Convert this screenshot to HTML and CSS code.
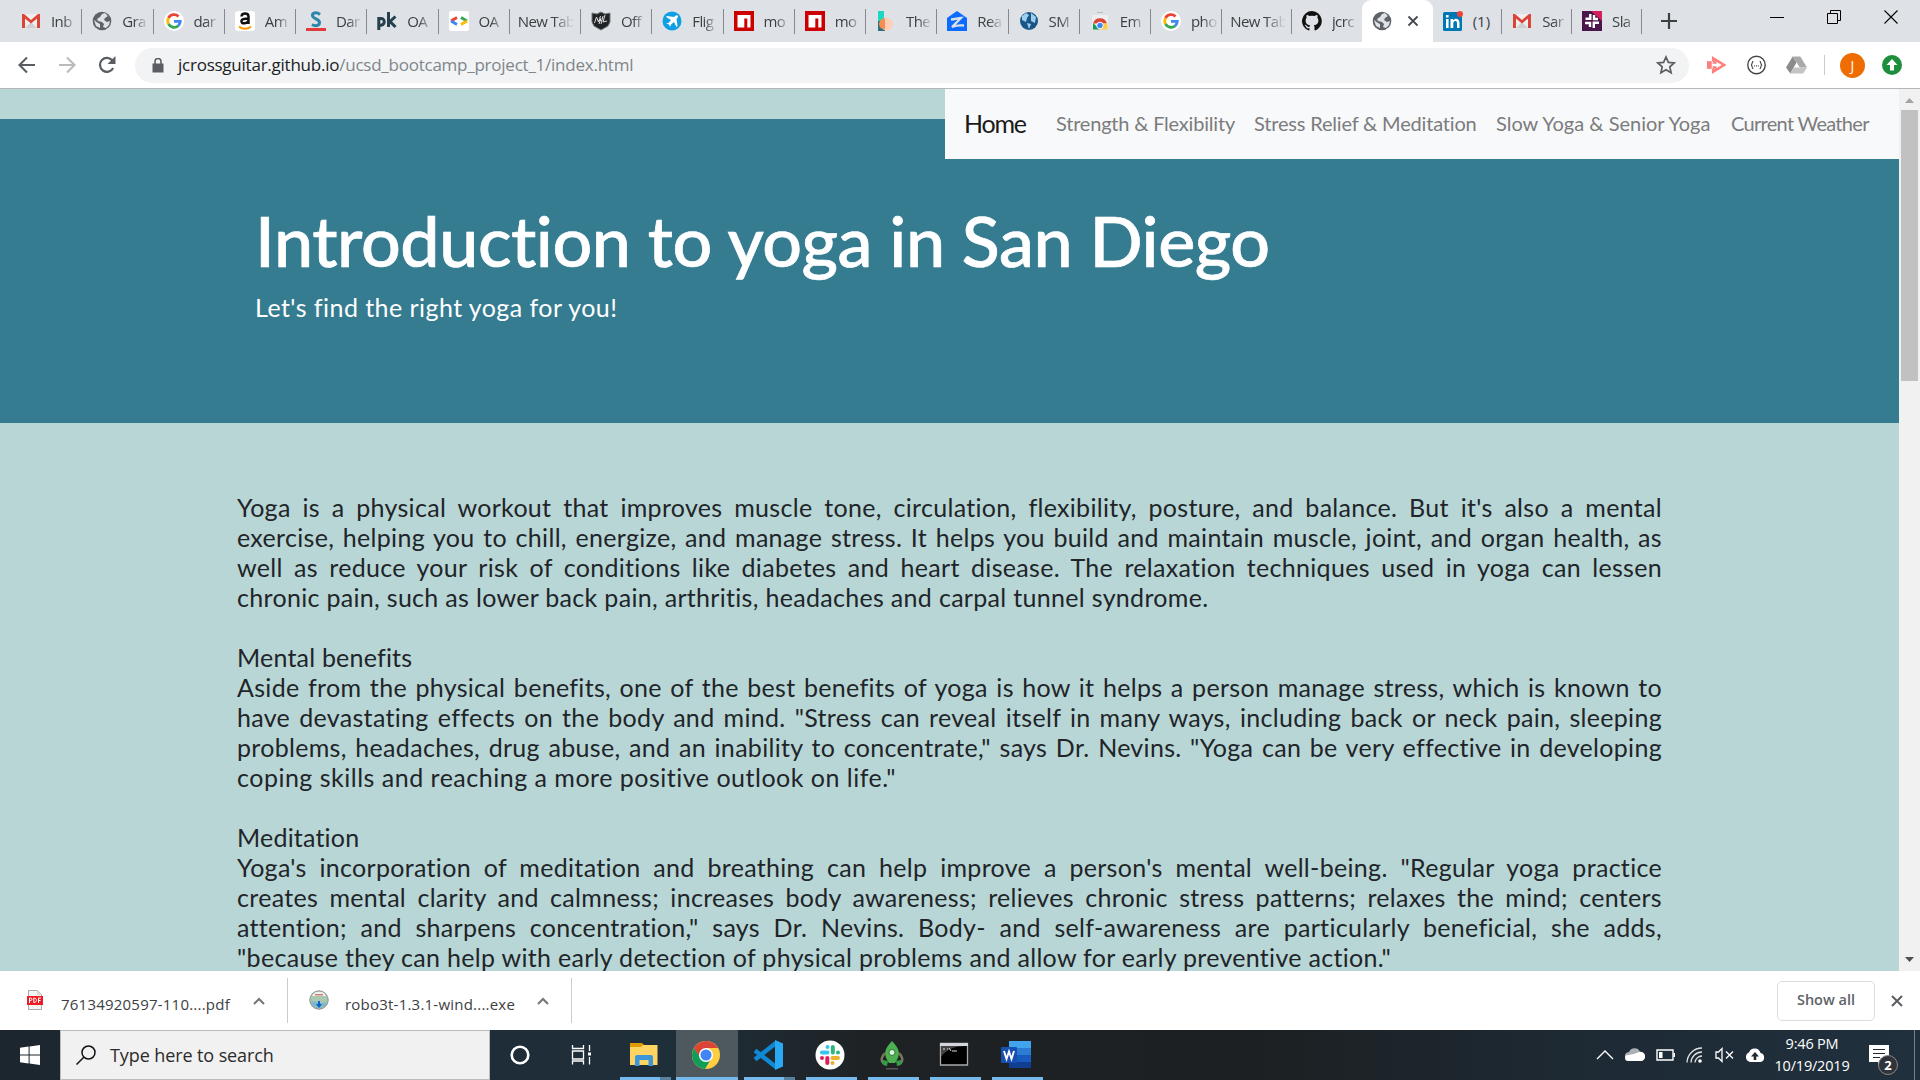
FILE: index.html
```html
<!DOCTYPE html>
<html lang="en">
<head>
<meta charset="utf-8">
<title>Introduction to yoga in San Diego</title>
<link rel="stylesheet" href="styles.css">
</head>
<body>
<svg class="defs" width="0" height="0">
  <symbol id="gmail" viewBox="0 0 20 20"><path fill="#eee" d="M1 3h18v14H1z"/><path fill="#d0d0d0" d="M4 17l6-6 6 6z"/><path fill="#db4437" d="M1 3h2l7 6 7-6h2v14h-3V7.500l-6 5-6-5V17H1z"/></symbol>
  <symbol id="globe" viewBox="0 0 20 20"><circle cx="10" cy="10" r="9.300" fill="#5f6368"/><path fill="#dee1e6" d="M10 3l3-1 3 3-3 2-1 2 3 2 3-1-1 4-3 3-3-1 1-3-2-2-4-1-1-2 3-2zM2 9l4 3 2 1v4L4 15z"/></symbol>
  <symbol id="google" viewBox="0 0 20 20"><circle cx="10" cy="10" r="10" fill="#fff"/><g fill="none" stroke-width="2.800"><path stroke="#ea4335" d="M4.500 7a6.300 6.300 0 0 1 10-1.600"/><path stroke="#fbbc05" d="M4.500 7a6.300 6.300 0 0 0 0 6"/><path stroke="#34a853" d="M4.500 13a6.300 6.300 0 0 0 9.800 1.700"/><path stroke="#4285f4" d="M14.300 14.700a6 6 0 0 0 2-4.400H10"/></g></symbol>
  <symbol id="npm" viewBox="0 0 20 20"><path fill="#c00" d="M0 0h20v20H0z"/><path fill="#fff" d="M3.500 4h13v12.500h-3.200V7.500h-3v9H3.500z"/></symbol>
</svg>

<header class="tabstrip">
  <div class="tab"><svg><use href="#gmail"/></svg><span>Inb</span></div>
  <div class="tab"><svg><use href="#globe"/></svg><span>Gra</span></div>
  <div class="tab"><svg><use href="#google"/></svg><span>dar</span></div>
  <div class="tab"><svg viewBox="0 0 20 20"><rect width="20" height="20" rx="3" fill="#fff"/><path d="M6.500 5.500c.3-4 7-4 7 0V13M13.500 7.500c-4 0-7.300.5-7 3 .5 2.800 6 2.400 7-1" fill="none" stroke="#111" stroke-width="2.500"/><path d="M4 15.500c3 3 9 3 12 0" fill="none" stroke="#f90" stroke-width="1.800"/></svg><span>Am</span></div>
  <div class="tab"><svg viewBox="0 0 20 20"><path d="M14 3.500C10 .5 6 2 6.500 5s7 3 7 6.500-4.500 4-7.500 2" fill="none" stroke="#2e86ab" stroke-width="3"/><path d="M0 17h20v3H0z" fill="#e23b3b"/></svg><span>Dar</span></div>
  <div class="tab"><svg viewBox="0 0 20 20"><g fill="none" stroke="#263f4d" stroke-width="3"><path d="M1.800 19V6M2 8c7-3 7 8 0 6M11.500 1v15M18.500 5.500L13 10.500l5.500 5.500"/></g></svg><span>OA</span></div>
  <div class="tab"><svg viewBox="0 0 20 20"><rect width="20" height="20" rx="2" fill="#fff"/><g fill="none" stroke-width="2.800"><path stroke="#ea4335" d="M8 6.500l-6 3.500"/><path stroke="#4285f4" d="M2 10l6 3.500"/><path stroke="#34a853" d="M12 6.500l6 3.500"/><path stroke="#fbbc05" d="M18 10l-6 3.500"/></g></svg><span>OA</span></div>
  <div class="tab plain"><span>New Tab</span></div>
  <div class="tab"><svg viewBox="0 0 20 20"><path fill="#202326" stroke="#777" d="M1 2l5 1 4-2 4 2 5-1v9l-2 4-7 4-7-4-2-4z"/><path d="M3.500 12l2-6 2 5 2-6M8 13l2-6M7.500 9.500h3M12 5l-2 8M14 4l-2 7 4-1" stroke="#ddd" fill="none"/></svg><span>Off</span></div>
  <div class="tab"><svg viewBox="0 0 20 20"><circle cx="10" cy="10" r="9.500" fill="#0e9fe5"/><path fill="#fff" d="M15.500 4.500c-1-.8-2 0-3.500 1.500L5 5l-1 1 5 3-2.500 3L4 12l3 1.500L8 16l1-2.500 3-2.500 2.500 5 1-1-1-7c1.500-1.500 2-2.500 1-3.500z"/></svg><span>Flig</span></div>
  <div class="tab"><svg><use href="#npm"/></svg><span>mo</span></div>
  <div class="tab"><svg><use href="#npm"/></svg><span>mo</span></div>
  <div class="tab"><svg viewBox="0 0 20 20"><path fill="#1fd6c0" d="M2 0h6v11H2z"/><path fill="#2d6e80" d="M2 10h7v10H2z"/><circle cx="10.500" cy="13" r="6.300" fill="#ffcdb8"/><path fill="#f58e4e" d="M3 13a5.500 5.500 0 0 1 6-5.500v11c-4-.5-6-2.500-6-5.500z"/></svg><span>The</span></div>
  <div class="tab"><svg viewBox="0 0 20 20"><path fill="#0b6cff" d="M10 0l10 7v13H0V7z"/><path d="M4 8.500c4 0 7-1.500 10-1.500L5 16c5-2 8-1.500 12-1.500" fill="none" stroke="#dee1e6" stroke-width="2.300"/></svg><span>Rea</span></div>
  <div class="tab"><svg viewBox="0 0 20 20"><circle cx="10" cy="10" r="9" fill="#1b5585"/><path fill="#9bd0ee" d="M3 5l4-3 3 2-2 3-1 4-4-2zM12 2l5 4-1 6-4-2V6zM8 12l4 1-2 5z"/></svg><span>SM</span></div>
  <div class="tab"><svg viewBox="0 0 20 20"><path fill="#bbb" d="M7 1h6v1H7z"/><path fill="#eee" d="M2 4h16v13H2z"/><path fill="#db4437" d="M3 12.500a7.300 7.300 0 0 1 14 0z"/><path fill="#0f9d58" d="M3 12l7 6.500H3z"/><path fill="#ffcd40" d="M12 12.500h5.500v6H9z"/><circle cx="10" cy="14.500" r="3.300" fill="#4285f4" stroke="#fff"/></svg><span>Em</span></div>
  <div class="tab"><svg><use href="#google"/></svg><span>pho</span></div>
  <div class="tab plain narrow"><span>New Tab</span></div>
  <div class="tab narrow bare"><svg viewBox="0 0 16 16"><path fill="#111" d="M8 0a8 8 0 0 0-2.500 15.600c.4 0 .5-.2.500-.400v-1.500c-2.200.5-2.700-1-2.700-1-.4-.9-.9-1.200-.9-1.200-.7-.5.100-.5.100-.5.800.1 1.200.8 1.200.8.700 1.300 1.900.9 2.300.7.100-.5.300-.9.500-1.100-1.800-.2-3.600-.9-3.600-4 0-.9.300-1.600.8-2.100-.1-.2-.4-1 .1-2.100 0 0 .7-.2 2.200.8a7.500 7.500 0 0 1 4 0c1.500-1 2.200-.8 2.200-.8.400 1.100.2 1.900.1 2.100.5.600.8 1.300.8 2.100 0 3.100-1.900 3.800-3.700 4 .3.200.6.700.6 1.500v2.200c0 .2.100.5.600.4A8 8 0 0 0 8 0z"/></svg><span>jcrc</span></div>
  <div class="tab active"><svg><use href="#globe"/></svg><svg class="close" viewBox="0 0 12 12"><path d="M1.500 1.500l9 9m0-9l-9 9" stroke="#45494d" stroke-width="1.800"/></svg></div>
  <div class="tab narrow"><svg viewBox="0 0 20 20"><rect y="1" width="19" height="19" rx="1.500" fill="#0077b5"/><path fill="#fff" d="M3 8h2.600v9H3zM3 4h2.600v2.500H3zM7.500 8H10v1.500c2-3 6.500-2 6.500 2V17H14v-5c0-3-3.700-2.500-3.700 0v5H7.500z"/><circle cx="17" cy="3" r="3" fill="#f44336"/></svg><span class="solid">(1)</span></div>
  <div class="tab narrow"><svg><use href="#gmail"/></svg><span>Sar</span></div>
  <div class="tab narrow"><svg viewBox="0 0 20 20"><path fill="#4a154b" d="M0 0h20v20H0z"/><path fill="#d3225b" d="M9 0h11v10z"/><path d="M8.300 3v4.700H3.500M12 4v4h4M3 12h5v4M11.800 17v-5.200H17" stroke="#fff" stroke-width="2.400" fill="none"/></svg><span>Sla</span></div>
  <svg class="plus" viewBox="0 0 16 16"><path d="M8 0v16M0 8h16" stroke="#3c4043" stroke-width="2.200"/></svg>
  <div class="window-buttons">
    <svg viewBox="0 0 14 14"><path d="M0 7.500h14" stroke="#000"/></svg>
    <svg viewBox="0 0 14 14"><path d="M.5 3.500h10v10H.5zM3.500 3V.5h10v10H11" stroke="#000" fill="none"/></svg>
    <svg viewBox="0 0 14 14"><path d="M.5.5l13 13m0-13l-13 13" stroke="#000" stroke-width="1.100"/></svg>
  </div>
</header>

<div class="toolbar">
  <svg class="nav-icon" viewBox="0 0 18 18"><path d="M17 9H2M9 1.500L1.500 9 9 16.500" stroke="#5a5e63" stroke-width="2.100" fill="none"/></svg>
  <svg class="nav-icon" viewBox="0 0 18 18"><path d="M1 9h15M9 1.500L16.500 9 9 16.500" stroke="#b9bbbd" stroke-width="2.100" fill="none"/></svg>
  <svg class="nav-icon" viewBox="0 0 18 18"><path d="M15.200 12A7 7 0 1 1 14.500 4.500" stroke="#5a5e63" stroke-width="2.200" fill="none"/><path fill="#5a5e63" d="M17.500 0v8h-8z"/></svg>
  <div class="omnibox">
    <svg class="lock" viewBox="0 0 12 15"><path fill="#5a5e63" d="M.5 5.500h11v9H.5z"/><path d="M3 6V3.500a3 3 0 0 1 6 0V6" stroke="#5a5e63" stroke-width="1.600" fill="none"/></svg>
    <span class="url"><b>jcrossguitar.github.io</b>/ucsd_bootcamp_project_1/index.html</span>
    <svg class="star" viewBox="0 0 20 20"><path d="M10 2l2.400 5.400 5.800.6-4.400 3.900 1.300 5.800L10 14.700l-5.100 3 1.300-5.800L1.800 8l5.800-.6z" stroke="#5a5e63" stroke-width="1.700" fill="none"/></svg>
  </div>
  <div class="extensions">
    <svg viewBox="0 0 22 20"><path fill="#ff7f7f" d="M1 6h5v8H1z"/><path d="M7.500 6V3L19 10 7.500 17v-3M7 7.500h4M7 12.500h4" stroke="#ff7f7f" stroke-width="2.600" fill="none"/></svg>
    <svg viewBox="0 0 22 22"><circle cx="11" cy="11" r="9.600" fill="#fff" stroke="#444" stroke-width="1.500"/><path d="M7.500 7C5.500 7 7 10.500 5 11c2 .5.500 4 2.500 4M14.500 7c2 0 .5 3.500 2.500 4-2 .5-.5 4-2.500 4M8.500 12h1M10.500 12h1M12.500 12h1" stroke="#444" stroke-width="1.300" fill="none"/></svg>
    <svg viewBox="0 0 22 20"><path fill="#8b8b8b" d="M7 1l4 6.500L4.500 19 0 12.500z"/><path fill="#a9a9a9" d="M7 1h8l7 11.500h-7.500z"/><path fill="#c4c4c4" d="M8 12.500h14L18 19H4.500z"/></svg>
    <i></i>
    <span class="avatar">J</span>
    <svg class="update" viewBox="0 0 20 20"><circle cx="10" cy="10" r="10" fill="#1e8e3e"/><path fill="#fff" d="M10 4l5.500 6H12v5.500H8V10H4.500z"/></svg>
  </div>
</div>

<div class="viewport">
  <main class="page">
    <nav class="navbar">
      <a class="brand">Home</a>
      <a class="l1">Strength &amp; Flexibility</a>
      <a class="l2">Stress Relief &amp; Meditation</a>
      <a class="l3">Slow Yoga &amp; Senior Yoga</a>
      <a class="l4">Current Weather</a>
    </nav>
    <section class="hero">
      <h1>Introduction to yoga in San Diego</h1>
      <p>Let's find the right yoga for you!</p>
    </section>
    <article class="copy">
      <p>Yoga is a physical workout that improves muscle tone, circulation, flexibility, posture, and balance. But it's also a mental</p>
      <p>exercise, helping you to chill, energize, and manage stress. It helps you build and maintain muscle, joint, and organ health, as</p>
      <p>well as reduce your risk of conditions like diabetes and heart disease. The relaxation techniques used in yoga can lessen</p>
      <p class="end">chronic pain, such as lower back pain, arthritis, headaches and carpal tunnel syndrome.</p>
      <h2>Mental benefits</h2>
      <p>Aside from the physical benefits, one of the best benefits of yoga is how it helps a person manage stress, which is known to</p>
      <p>have devastating effects on the body and mind. "Stress can reveal itself in many ways, including back or neck pain, sleeping</p>
      <p>problems, headaches, drug abuse, and an inability to concentrate," says Dr. Nevins. "Yoga can be very effective in developing</p>
      <p class="end loose">coping skills and reaching a more positive outlook on life."</p>
      <h2>Meditation</h2>
      <p>Yoga's incorporation of meditation and breathing can help improve a person's mental well-being. "Regular yoga practice</p>
      <p>creates mental clarity and calmness; increases body awareness; relieves chronic stress patterns; relaxes the mind; centers</p>
      <p>attention; and sharpens concentration," says Dr. Nevins. Body- and self-awareness are particularly beneficial, she adds,</p>
      <p class="end">"because they can help with early detection of physical problems and allow for early preventive action."</p>
    </article>
  </main>
  <div class="scrollbar">
    <svg viewBox="0 0 9 5"><path fill="#a3a3a3" d="M0 5l4.500-5L9 5z"/></svg>
    <div class="thumb"></div>
    <svg viewBox="0 0 9 5"><path fill="#505050" d="M0 0l4.500 5L9 0z"/></svg>
  </div>
</div>

<div class="downloads">
  <div class="download">
    <svg viewBox="0 0 20 20"><path fill="#f4f4f4" stroke="#aaa" d="M3.500.5h9l4 4v15h-13z"/><path fill="#d9d9d9" d="M12 0v5h5z"/><path fill="#ee1c25" d="M2 6h16v9H2z"/><path d="M4.500 13V8h1.300c1.500 0 1.500 2.500 0 2.500H4.500M8.800 8v4.500c3.500 0 3.500-4.500 0-4.500M13.500 13V8H16M13.500 10.500h2" stroke="#fff" fill="none"/></svg>
    <span>76134920597-110....pdf</span>
    <svg class="chev" viewBox="0 0 12 8"><path d="M1 7l5-5 5 5" stroke="#757575" stroke-width="2" fill="none"/></svg>
  </div>
  <div class="download">
    <svg viewBox="0 0 20 20"><circle cx="10" cy="10" r="9.200" fill="#a9c8b0" stroke="#8a8f8d"/><path fill="#eef4ee" d="M3 6a8 8 0 0 1 14 0z"/><path fill="#d77" d="M6 4h8v1.500H6z"/><path fill="#7fb8c9" d="M2 12c4-3 6 3 16 0-2 8-14 8-16 0z"/><path fill="#0b63c5" d="M9 11h2v3h2l-3 4-3-4h2z"/></svg>
    <span>robo3t-1.3.1-wind....exe</span>
    <svg class="chev" viewBox="0 0 12 8"><path d="M1 7l5-5 5 5" stroke="#757575" stroke-width="2" fill="none"/></svg>
  </div>
  <button class="show-all">Show all</button>
  <svg class="dismiss" viewBox="0 0 12 12"><path d="M1 1l10 10M11 1L1 11" stroke="#5a5e63" stroke-width="2"/></svg>
</div>

<footer class="taskbar">
  <div class="start"><svg viewBox="0 0 20 20"><path fill="#fff" d="M0 2.800l8.600-1.200v8H0zM9.600 1.500L20 0v9.600H9.600zM0 10.500h8.600v8L0 17.300zM9.600 10.500H20V20L9.600 18.600z"/></svg></div>
  <div class="search"><svg viewBox="0 0 20 20"><circle cx="12.500" cy="7.500" r="6.500" fill="none" stroke="#111" stroke-width="1.500"/><path d="M8 12l-7.500 7.500" stroke="#111" stroke-width="1.500"/></svg><span>Type here to search</span></div>
  <div class="app first"><svg viewBox="0 0 30 30"><circle cx="15" cy="15" r="8.300" fill="none" stroke="#fff" stroke-width="2.600"/></svg></div>
  <div class="app"><svg viewBox="0 0 30 30"><path d="M4.500 5v3.500h11V5M4.500 24.500V21h11v3.500M4.500 11h11v8h-11zM21.500 5v6M21.500 17v7.500" stroke="#fff" stroke-width="1.300" fill="none"/><path fill="#fff" d="M20 12.500h3v3h-3z"/></svg></div>
  <div class="app open multi"><svg viewBox="0 0 30 30"><path fill="#e09b00" d="M1 3h12l2 2-2 4H1z"/><path fill="#ffd463" d="M1 7h11l2-2h14.500v20H1z"/><path fill="#3c96dc" d="M6 26V17q0-2 2-2h14q2 0 2 2v9h-4.500v-6h-9v6z"/></svg></div>
  <div class="app open current"><svg viewBox="0 0 30 30"><circle cx="15" cy="15" r="14" fill="#ffcd40"/><path fill="#db4437" d="M2.900 8a14 14 0 0 1 24.200 0H15l-6 10z"/><path fill="#0f9d58" d="M2.900 8A14 14 0 0 0 14 29l6-10-10 0z"/><circle cx="15" cy="15" r="6.300" fill="#4285f4" stroke="#fff" stroke-width="1.500"/></svg></div>
  <div class="app open multi"><svg viewBox="0 0 30 30"><path d="M2 10.500L23 27M2 19.500L23 3" stroke="#1089d5" stroke-width="4.500"/><path fill="#29a8f3" d="M22 0l8 3.500v23L22 30z"/></svg></div>
  <div class="app open"><svg viewBox="0 0 30 30"><circle cx="15" cy="15" r="14.500" fill="#fff"/><g stroke-width="4" stroke-linecap="round"><path d="M12.500 7v0M7 12.500h5.500" stroke="#36c5f0"/><path d="M17.800 7v5.500M23 12.500v0" stroke="#2eb67d"/><path d="M17.500 18H23M17.500 23v0" stroke="#ecb22e"/><path d="M12.300 18v5M7 18v0" stroke="#e01e5a"/></g></svg></div>
  <div class="app open"><svg viewBox="0 0 30 30"><path d="M8 13c-5 6-4 9 1 12M22 13c5 6 4 9-1 12" stroke="#7a765c" stroke-width="2.500" fill="none"/><path fill="#4caf50" d="M15 1c8 8 9 14 3 22h-6C6 15 7 9 15 1z"/><path fill="#2f9e44" d="M6 20l5 1-1 5-5-2zM24 20l-5 1 1 5 5-2z"/><circle cx="15" cy="12.500" r="3" fill="#dff3df" stroke="#287a35"/><path fill="#555" d="M9 28h12v1.500H9z"/></svg></div>
  <div class="app open"><svg viewBox="0 0 30 30"><path fill="#000" stroke="#aaa" stroke-width="1.300" d="M1.500 3.500h27v21.500h-27z"/><path fill="#d3d6da" d="M1 3h28v3H1z"/><path fill="#444" d="M2 6h25c-10 0-20 3-25 11z"/><path d="M4 9h2M8 9h1M10 8l2 3M13 11h5" stroke="#ddd"/></svg></div>
  <div class="app open"><svg viewBox="0 0 30 30"><path fill="#41a5ee" d="M8 1h22v7H8z"/><path fill="#2b7cd3" d="M8 8h22v7H8z"/><path fill="#185abd" d="M8 15h22v7H8z"/><path fill="#103f91" d="M8 22h22v6H8z"/><rect y="7" width="16" height="16" rx="1" fill="#1750b0"/><path d="M3 11l2.500 8L8 11.500l2.500 7.500L13 11" stroke="#fff" stroke-width="1.900" fill="none"/></svg></div>
  <div class="tray">
    <svg viewBox="0 0 20 20"><path d="M2 14l8-8 8 8" stroke="#fff" stroke-width="1.400" fill="none"/></svg>
    <svg viewBox="0 0 20 20"><path fill="#aab0b5" d="M0 12a4 4 0 0 1 4-5 6 6 0 0 1 11-.5l-9 7z"/><path fill="#fff" d="M3 16a3 3 0 0 1 0-6l6-1 5-2a4.500 4.500 0 0 1 3 9z"/></svg>
    <svg viewBox="0 0 20 20"><path d="M2 5h16v10H2z" stroke="#fff" stroke-width="1.400" fill="none"/><path fill="#fff" d="M4 7h3.500v6H4zM18.500 8H20v4h-1.500z"/></svg>
    <svg viewBox="0 0 20 20"><g fill="none" stroke="#dfe3e6" stroke-width="1.300"><path d="M2 17.500A15 15 0 0 1 17 3M6 17.500A11 11 0 0 1 17 7M10 17.500A7 7 0 0 1 17 11"/></g><circle cx="15" cy="16" r="1.800" fill="#fff"/></svg>
    <svg viewBox="0 0 20 20"><path d="M1 7h2.500L7 3.500v13L3.500 13H1zM11 6.500l7 7m0-7l-7 7" stroke="#fff" stroke-width="1.300" fill="none"/></svg>
    <svg viewBox="0 0 20 20"><path fill="#fff" d="M5 17a5 5 0 0 1-1-9.500A6 6 0 0 1 15.500 8 4.600 4.600 0 0 1 15.500 17z"/><path fill="#1f2c36" d="M10 7l4 4.500h-2.700V15H8.700v-3.500H6z"/></svg>
  </div>
  <div class="clock"><span class="time">9:46 PM</span><span>10/19/2019</span></div>
  <div class="notice"><svg viewBox="0 0 20 20"><path fill="#fff" d="M0 0h20v17h-7l-4 4v-4H0z"/><path d="M4 4.500h12M4 8.500h12M4 12.500h7" stroke="#1f2c36" stroke-width="1.200"/></svg><b>2</b></div>
</footer>
</body>
</html>
```
FILE: styles.css
```css
* { box-sizing: border-box; }
body {
  margin: 0; width: 1920px; height: 1080px; overflow: hidden;
  display: flex; flex-direction: column;
  font-family: "Open Sans", "Noto Sans", sans-serif;
  background: #fff;
}
svg { display: block; flex: none; }
.defs { position: absolute; }

/* tab strip */
.tabstrip { height: 42px; flex: none; display: flex; align-items: center; padding-left: 11px; background: #dee1e6; }
.tab { width: 71.25px; height: 25px; flex: none; display: flex; align-items: center; padding-left: 10px; border-right: 1px solid #85888c; }
.tab.narrow { width: 69.7px; }
.tab.plain { padding-left: 8px; }
.tab svg { width: 20px; height: 20px; margin-right: 10px; }
.tab span { width: 26px; white-space: nowrap; font-size: 15px; letter-spacing: -.6px; color: #3c4043; -webkit-mask-image: linear-gradient(90deg, #000 45%, #0003 90%); mask-image: linear-gradient(90deg, #000 45%, #0003 90%); }
.tab .solid { letter-spacing: 0; -webkit-mask-image: none; mask-image: none; }
.tab.plain span { width: 55px; -webkit-mask-image: linear-gradient(90deg, #000 65%, #0002 95%); mask-image: linear-gradient(90deg, #000 65%, #0002 95%); }
.tab.bare { border: 0; }
.tab.active { width: 71px; height: 42px; background: #fff; border: 0; border-radius: 9px 9px 0 0; padding-left: 10px; }
.tab.active .close { width: 12px; height: 12px; margin: 0 0 0 5px; }
.plus { width: 16px; height: 16px; margin-left: 19px; }
.window-buttons { margin: -8px 22px 0 auto; display: flex; gap: 43px; }
.window-buttons svg { width: 14px; height: 14px; }

/* address bar */
.toolbar { height: 47px; flex: none; display: flex; align-items: center; padding-left: 18px; border-bottom: 1px solid #b4b6b8; }
.nav-icon { width: 18px; height: 18px; margin-right: 22px; }
.omnibox { width: 1554px; height: 35px; margin-left: -3px; flex: none; border-radius: 18px; background: #f1f3f4; display: flex; align-items: center; padding: 0 13px 0 17px; }
.lock { width: 12px; height: 15px; }
.url { margin: -2px 0 0 14px; font-size: 17px; letter-spacing: -.24px; color: #80868b; white-space: nowrap; }
.url b { font-weight: 400; color: #202124; }
.star { width: 20px; height: 20px; margin-left: auto; }
.extensions { flex: 1; display: flex; align-items: center; padding-left: 17px; }
.extensions svg { width: 21px; height: 20px; margin-right: 19px; }
.extensions i { width: 1px; height: 20px; margin: 0 15px 0 -2px; background: #c9cbce; }
.avatar { width: 25px; height: 25px; border-radius: 50%; background: #ef6c00; color: #fff; font-size: 14px; line-height: 25px; text-align: center; }
.extensions .update { width: 20px; margin: 0 0 0 17px; }

/* web page */
.viewport { height: 882px; flex: none; display: flex; }
.page { position: relative; width: 1899px; padding-top: 30px; background: #b8d6d5; overflow: hidden; font-family: Lato, sans-serif; }
.navbar { position: absolute; top: 0; right: 0; width: 954px; height: 70px; background: #f8f9fa; display: flex; align-items: center; padding: 0 0 2px 19px; white-space: nowrap; font-size: 20px; color: #7b7c7d; }
.brand { width: 92px; font-size: 25px; color: #1a1a1a; letter-spacing: -1.2px; }
.l1 { width: 198px; letter-spacing: -.2px; }
.l2 { width: 242px; letter-spacing: -.18px; }
.l3 { width: 235px; }
.l4 { letter-spacing: -.7px; }
.hero { height: 304px; padding: 79px 255px 0; background: #367c91; color: #fff; }
.hero h1 { margin: 0; height: 84px; line-height: 84px; font-size: 70px; font-weight: 500; letter-spacing: -.44px; -webkit-text-stroke: .7px #fff; white-space: nowrap; }
.hero p { margin: 10px 0 0; font-size: 25px; line-height: 30px; letter-spacing: .45px; }
.copy { width: 1425px; margin: 69.4px 0 0 237px; font-size: 25px; line-height: 30px; color: #212529; }
.copy p { margin: 0; height: 30px; white-space: nowrap; text-align-last: justify; letter-spacing: .31px; }
.copy .end { text-align-last: left; }
.copy .loose { letter-spacing: .5px; }
.copy h2 { margin: 30px 0 0; height: 30px; font-size: 25px; font-weight: 400; line-height: 30px; letter-spacing: .2px; }
.scrollbar { width: 21px; background: #f1f1f1; display: flex; flex-direction: column; align-items: center; padding: 9px 0; }
.scrollbar svg { width: 9px; height: 5px; }
.thumb { width: 17px; height: 271px; margin: 7px 0 auto; background: #c1c1c1; }

/* downloads shelf */
.downloads { height: 59px; flex: none; display: flex; align-items: center; background: #fff; }
.download { height: 45px; width: 284px; display: flex; align-items: center; padding-left: 21px; border-right: 1px solid #ccc; }
.download:first-child { width: 288px; padding-left: 25px; }
.download svg { width: 20px; height: 20px; margin: -2px 16px 0 0; }
.download span { width: 171px; white-space: nowrap; font-size: 15px; letter-spacing: .22px; color: #3c4043; padding-top: 6px; }
.download .chev { width: 12px; height: 8px; margin: 0 0 0 21px; }
.show-all { margin: 0 0 0 auto; width: 98px; height: 40px; padding: 0 0 3px; background: #fff; border: 1px solid #dadce0; border-radius: 5px; font: 600 14.5px "Open Sans", sans-serif; color: #5f6368; }
.dismiss { width: 12px; height: 12px; margin: 0 17px 0 16px; }

/* taskbar */
.taskbar { height: 50px; flex: none; display: flex; align-items: center; background: linear-gradient(90deg, #1d262f 0, #1f2f3a 35%, #1e2225 45%, #1c2022 65%, #1e2b36 85%, #20303d 100%); color: #fff; }
.start { width: 60px; padding-left: 20px; }
.start svg, .search svg { width: 20px; height: 20px; }
.search { width: 430px; height: 50px; display: flex; align-items: center; gap: 14px; padding-left: 15px; background: #f1f1f1; border: 1px solid #bbb; color: #2b2b2b; font-size: 18px; letter-spacing: -.1px; }
.app { width: 62px; height: 50px; display: flex; align-items: center; justify-content: center; background: linear-gradient(#76b9ed, #76b9ed) bottom / 0 3px no-repeat; }
.app.first { padding-right: 2px; }
.app svg { width: 30px; height: 30px; }
.app.open { background-size: 51px 3px; }
.app.open svg { margin-right: 2px; }
.app.multi { background: linear-gradient(90deg, #76b9ed 40px, #58809f 40px) bottom / 51px 3px no-repeat; }
.app.current { background-color: #4d585f; background-size: 62px 3px; }
.tray { margin-left: auto; display: flex; gap: 10px; }
.tray svg { width: 20px; height: 20px; }
.clock { width: 94px; display: flex; flex-direction: column; align-items: center; font-size: 14.500px; line-height: 22px; letter-spacing: -.2px; }
.notice { position: relative; width: 56px; height: 50px; margin-right: 5px; padding: 15px 0 0 10px; border-right: 1px solid #77818a; }
.notice svg { width: 20px; height: 20px; overflow: visible; }
.notice b { position: absolute; left: 19px; top: 25px; width: 20px; height: 20px; border: 1px solid #888; border-radius: 50%; background: #30343a; font-size: 13px; line-height: 18px; text-align: center; }
```
